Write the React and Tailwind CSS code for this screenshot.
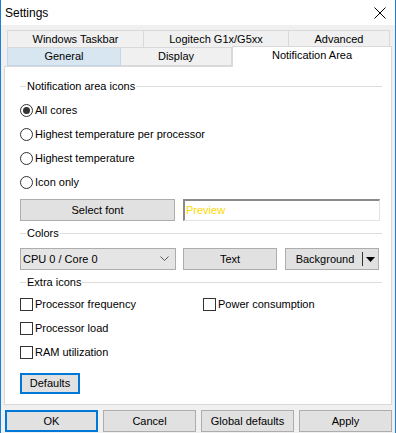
const Radio = ({ checked, label }) => (
  <div className="flex items-center h-[24px]">
    <div className="w-[13px] h-[13px] rounded-full border border-[#333333] bg-white flex items-center justify-center">
      {checked && <div className="w-[7px] h-[7px] rounded-full bg-[#333333]" />}
    </div>
    <span className="ml-[2px]">{label}</span>
  </div>
);

const Check = ({ label }) => (
  <div className="flex items-center h-[24px]">
    <div className="w-[13px] h-[13px] border border-[#333333] bg-white" />
    <span className="ml-[2px]">{label}</span>
  </div>
);

const GroupTitle = ({ label, className = "" }) => (
  <div className={`flex items-center ${className}`}>
    <div className="w-[6px] h-px bg-[#dcdcdc]" />
    <span className="px-[1px]">{label}</span>
    <div className="flex-1 h-px bg-[#dcdcdc]" />
  </div>
);

const Button = ({ children, className = "", primary }) => (
  <div
    className={`flex items-center justify-center bg-[#e1e1e1] ${
      primary ? "border-2 border-[#0078d7]" : "border border-[#adadad]"
    } ${className}`}
  >
    {children}
  </div>
);

export default function App() {
  return (
    <div
      className="w-[396px] h-[433px] bg-[#f0f0f0] border-x border-[#1c7fd4] text-[11px] text-black overflow-hidden"
      style={{ fontFamily: '"Liberation Sans", Arial, sans-serif' }}
    >
      {/* ===== TITLE BAR ===== */}
      <div className="h-[25px] bg-white flex items-center justify-between pl-[4px] pr-[9px]">
        <span className="text-[12px]">Settings</span>
        <svg width="12" height="12" viewBox="0 0 12 12">
          <path d="M0.5 0.5 L11.5 11.5 M11.5 0.5 L0.5 11.5" stroke="#000" strokeWidth="1" />
        </svg>
      </div>

      {/* ===== TABS ===== */}
      <div className="pt-[5px]">
        <div className="flex ml-[6px] h-[18px]">
          <div className="w-[137px] border border-[#d9d9d9] flex items-center justify-center">Windows Taskbar</div>
          <div className="w-[145px] border border-l-0 border-[#d9d9d9] flex items-center justify-center">Logitech G1x/G5xx</div>
          <div className="w-[101px] border border-l-0 border-[#d9d9d9] flex items-center justify-center">Advanced</div>
        </div>
        <div className="flex ml-[6px] h-[18px] items-end">
          <div className="w-[114px] h-[18px] bg-[#d8e6f2] border border-t-0 border-[#c5d6e6] flex items-center justify-center">General</div>
          <div className="w-[111px] h-[18px] border border-l-0 border-t-0 border-[#d9d9d9] flex items-center justify-center">Display</div>
          <div className="w-[160px] h-[21px] -mb-px relative z-10 bg-white border border-b-0 border-[#d9d9d9] flex items-center justify-center pb-[3px]">
            Notification Area
          </div>
        </div>

        {/* ===== PANEL ===== */}
        <div className="ml-[3px] w-[388px] h-[339px] bg-white border border-[#d9d9d9] pl-[15px] pr-[9px] flex flex-col">
          <GroupTitle label="Notification area icons" className="h-[24px] mt-[7px]" />
          <Radio checked label="All cores" />
          <Radio label="Highest temperature per processor" />
          <Radio label="Highest temperature" />
          <Radio label="Icon only" />

          <div className="flex h-[22px] mt-[5px]">
            <Button className="w-[155px]">Select font</Button>
            <div className="ml-[8px] w-[197px] border-t-2 border-l-2 border-[#8a8a8a] border-b border-r border-b-[#e3e3e3] border-r-[#e3e3e3] flex items-center pl-[1px]">
              <span className="text-[#ffd800]">Preview</span>
            </div>
          </div>

          <GroupTitle label="Colors" className="h-[24px]" />

          <div className="flex h-[22px] mt-[3px]">
            <div className="w-[156px] bg-[#e5e5e5] border border-[#adadad] flex items-center justify-between pl-[2px] pr-[6px]">
              <span>CPU 0 / Core 0</span>
              <svg width="9" height="6" viewBox="0 0 9 6">
                <path d="M0.5 0.5 L4.5 4.5 L8.5 0.5" stroke="#555" fill="none" strokeWidth="1" />
              </svg>
            </div>
            <Button className="ml-[7px] w-[94px]">Text</Button>
            <div className="ml-[8px] w-[94px] bg-[#e1e1e1] border border-[#adadad] flex items-center">
              <span className="flex-1 text-center pl-[2px]">Background</span>
              <div className="w-px h-[14px] bg-[#333]" />
              <svg className="mx-[3px]" width="9" height="5" viewBox="0 0 9 5">
                <path d="M0 0 L9 0 L4.5 5 Z" fill="#000" />
              </svg>
            </div>
          </div>

          <GroupTitle label="Extra icons" className="h-[20px] mt-[2px]" />

          <div className="grid grid-cols-[183px_1fr]">
            <Check label="Processor frequency" />
            <Check label="Power consumption" />
            <Check label="Processor load" />
            <div />
            <Check label="RAM utilization" />
          </div>

          <Button primary className="mt-[9px] w-[60px] h-[21px]">Defaults</Button>
        </div>
      </div>

      {/* ===== FOOTER BUTTONS ===== */}
      <div className="flex gap-[5px] ml-[4px] mt-[5px]">
        <Button primary className="w-[93px] h-[22px]">OK</Button>
        <Button className="w-[93px] h-[22px]">Cancel</Button>
        <Button className="w-[93px] h-[22px]">Global defaults</Button>
        <Button className="w-[93px] h-[22px]">Apply</Button>
      </div>
    </div>
  );
}
